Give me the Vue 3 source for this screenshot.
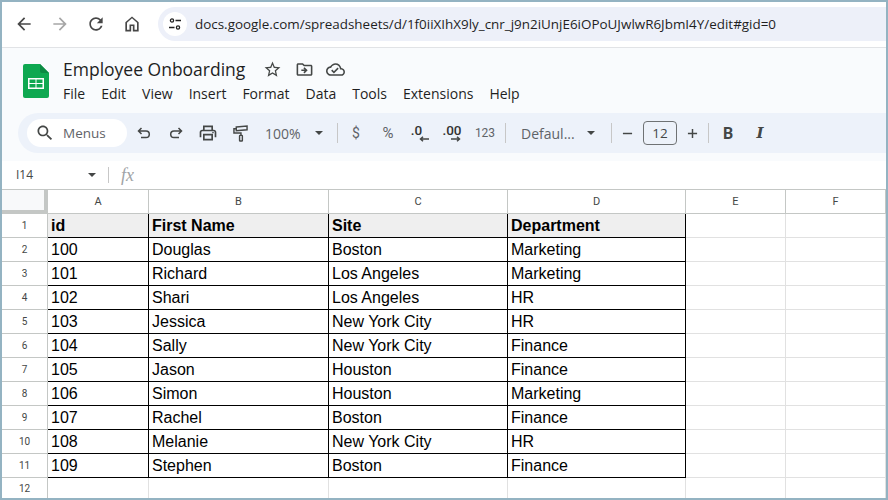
<script setup>
const menus = ['File', 'Edit', 'View', 'Insert', 'Format', 'Data', 'Tools', 'Extensions', 'Help'];

const columns = ['A', 'B', 'C', 'D', 'E', 'F'];

const header = ['id', 'First Name', 'Site', 'Department'];

const people = [
  ['100', 'Douglas', 'Boston', 'Marketing'],
  ['101', 'Richard', 'Los Angeles', 'Marketing'],
  ['102', 'Shari', 'Los Angeles', 'HR'],
  ['103', 'Jessica', 'New York City', 'HR'],
  ['104', 'Sally', 'New York City', 'Finance'],
  ['105', 'Jason', 'Houston', 'Finance'],
  ['106', 'Simon', 'Houston', 'Marketing'],
  ['107', 'Rachel', 'Boston', 'Finance'],
  ['108', 'Melanie', 'New York City', 'HR'],
  ['109', 'Stephen', 'Boston', 'Finance'],
];
</script>

<template>
  <div class="window">
    <!-- browser bar -->
    <div class="browser">
      <button class="nav nav-back">
        <svg viewBox="0 0 24 24" width="20" height="20"><path d="M20 11H7.83l5.59-5.59L12 4l-8 8 8 8 1.41-1.41L7.83 13H20v-2z" /></svg>
      </button>
      <button class="nav nav-off">
        <svg viewBox="0 0 24 24" width="20" height="20"><path d="M12 4l-1.41 1.41L16.17 11H4v2h12.17l-5.58 5.59L12 20l8-8z" /></svg>
      </button>
      <button class="nav">
        <svg viewBox="0 0 24 24" width="20" height="20"><path d="M17.65 6.35C16.2 4.9 14.21 4 12 4c-4.42 0-7.99 3.58-7.99 8s3.57 8 7.99 8c3.73 0 6.84-2.55 7.73-6h-2.08c-.82 2.33-3.04 4-5.65 4-3.31 0-6-2.69-6-6s2.69-6 6-6c1.66 0 3.14.69 4.22 1.78L13 11h7V4l-2.35 2.35z" /></svg>
      </button>
      <button class="nav">
        <svg viewBox="0 0 24 24" width="20" height="20"><path d="M12 5.2l6 5.3V19h-3v-6.500H9V19H6v-8.500l6-5.300M12 3L4 10v11h7v-6.500h2V21h7V10l-8-7z" /></svg>
      </button>
      <div class="address">
        <span class="tune">
          <svg viewBox="0 0 16 16" width="16" height="16" fill="none" stroke="#1f1f1f" stroke-width="1.3">
            <circle cx="5" cy="4.500" r="1.600" />
            <path d="M8.500 4.500h5.500M2 11.500h5.500" />
            <circle cx="11" cy="11.500" r="1.600" />
          </svg>
        </span>
        <span class="url">docs.google.com/spreadsheets/d/1f0iiXIhX9ly_cnr_j9n2iUnjE6iOPoUJwlwR6JbmI4Y/edit#gid=0</span>
      </div>
    </div>

    <!-- docs header -->
    <div class="docs">
      <div class="title-row">
        <svg class="logo" viewBox="0 0 26 34" width="26" height="34">
          <path d="M2 0h15l9 9v23a2 2 0 0 1-2 2H2a2 2 0 0 1-2-2V2a2 2 0 0 1 2-2z" fill="#0fa851" />
          <path d="M17 0l9 9h-7a2 2 0 0 1-2-2z" fill="#0c8a43" />
          <path d="M5 14h16v11H5z M6.500 15.500V19h6v-3.500z M13.500 15.500V19h6v-3.500z M6.500 20v3.500h6V20z M13.500 20v3.500h6V20z" fill="#fff" fill-rule="evenodd" />
        </svg>
        <div class="title-text">
          <div class="title-line">
            <span class="title">Employee Onboarding</span>
            <svg class="star" viewBox="0 0 24 24" width="19" height="19"><path d="M22 9.240l-7.190-.620L12 2 9.190 8.630 2 9.240l5.460 4.730L5.820 21 12 17.270 18.180 21l-1.630-7.030L22 9.240zM12 15.400l-3.760 2.270 1-4.280-3.320-2.880 4.380-.380L12 6.100l1.710 4.040 4.380.380-3.320 2.880 1 4.280L12 15.400z" /></svg>
            <svg class="move" viewBox="0 0 24 24" width="19" height="19"><path d="M20 6h-8l-2-2H4c-1.110 0-1.990.890-1.990 2L2 18c0 1.110.890 2 2 2h16c1.110 0 2-.890 2-2V8c0-1.110-.890-2-2-2zm0 12H4V6h5.170l2 2H20v10z" /><path d="M12.160 12H8v2h4.160l-1.590 1.590L11.990 17 16 13.010 11.990 9l-1.420 1.410z" /></svg>
            <svg class="cloud" viewBox="0 0 24 24" width="19" height="19"><path d="M19.350 10.040C18.670 6.590 15.640 4 12 4 9.110 4 6.600 5.640 5.350 8.040 2.340 8.360 0 10.910 0 14c0 3.310 2.690 6 6 6h13c2.760 0 5-2.240 5-5 0-2.640-2.050-4.780-4.650-4.960zM19 18H6c-2.210 0-4-1.790-4-4 0-2.050 1.530-3.760 3.560-3.970l1.070-.110.500-.950C8.080 7.140 9.940 6 12 6c2.620 0 4.880 1.860 5.390 4.430l.300 1.500 1.530.110c1.560.100 2.780 1.410 2.780 2.960 0 1.650-1.350 3-3 3zm-9-3.820l-2.090-2.090L6.500 13.500 10 17l6.010-6.010-1.410-1.410z" /></svg>
          </div>
          <div class="menus">
            <span v-for="m in menus" :key="m">{{ m }}</span>
          </div>
        </div>
      </div>

      <!-- toolbar -->
      <div class="toolbar">
        <div class="search">
          <svg viewBox="0 0 24 24" width="20" height="20"><path d="M15.500 14h-.790l-.280-.270C15.410 12.590 16 11.110 16 9.500 16 5.910 13.090 3 9.500 3S3 5.910 3 9.500 5.910 16 9.500 16c1.610 0 3.090-.590 4.230-1.570l.270.280v.790l5 4.990L20.490 19l-4.990-5zm-6 0C7.010 14 5 11.990 5 9.500S7.010 5 9.500 5 14 7.010 14 9.500 11.990 14 9.500 14z" /></svg>
          <span>Menus</span>
        </div>
        <span class="tb tb-first">
          <svg viewBox="0 0 16 16" width="16" height="16" fill="none" stroke="#444746" stroke-width="1.500"><path d="M5.500 3L2.500 6l3 3M2.500 6H10a3.300 3.300 0 0 1 0 6.600H5" /></svg>
        </span>
        <span class="tb">
          <svg viewBox="0 0 16 16" width="16" height="16" fill="none" stroke="#444746" stroke-width="1.500"><path d="M10.500 3l3 3-3 3M13.500 6H6a3.300 3.300 0 0 0 0 6.600h5" /></svg>
        </span>
        <span class="tb">
          <svg viewBox="0 0 24 24" width="20" height="20"><path d="M19 8h-1V3H6v5H5c-1.660 0-3 1.340-3 3v6h4v4h12v-4h4v-6c0-1.660-1.340-3-3-3zM8 5h8v3H8V5zm8 14H8v-4h8v4zm2-2v-4H6v4H4v-6c0-.550.450-1 1-1h14c.550 0 1 .450 1 1v6h-2z" /><circle cx="18" cy="11.500" r="1" /></svg>
        </span>
        <span class="tb">
          <svg viewBox="0 0 16 18" width="15" height="17" fill="none" stroke="#444746" stroke-width="1.500"><path d="M3.500 2l11.500-1v4L3.500 6z" /><path d="M3.500 4H1v4.500h7.500V11" /><rect x="7" y="11" width="3" height="6" rx=".6" /></svg>
        </span>
        <span class="zoom-val">100%</span>
        <span class="caret"></span>
        <span class="sep sep-a"></span>
        <span class="tb tb-dollar tb-text">$</span>
        <span class="tb tb-text tb-percent">%</span>
        <span class="tb tb-dec tb-dec-one">
          <b>.0</b>
          <svg viewBox="0 0 10 6" width="10" height="6" fill="none" stroke="#444746" stroke-width="1.500"><path d="M10 3H1.500M4 .7L1.500 3 4 5.300" /></svg>
        </span>
        <span class="tb tb-dec">
          <b>.00</b>
          <svg viewBox="0 0 10 6" width="10" height="6" fill="none" stroke="#444746" stroke-width="1.500"><path d="M0 3h8.500M6 .7L8.500 3 6 5.300" /></svg>
        </span>
        <span class="tb tb-text tb-123">123</span>
        <span class="sep sep-b"></span>
        <span class="font-name">Defaul...</span>
        <span class="caret caret-font"></span>
        <span class="sep sep-c"></span>
        <span class="tb tb-size">
          <svg viewBox="0 0 12 12" width="11" height="11"><path d="M1 5.200h10v1.600H1z" /></svg>
        </span>
        <span class="size-box">12</span>
        <span class="tb tb-size">
          <svg viewBox="0 0 12 12" width="11" height="11"><path d="M1 5.200h4.200V1h1.600v4.200H11v1.600H6.800V11H5.200V6.800H1z" /></svg>
        </span>
        <span class="sep"></span>
        <span class="tb tb-bold">B</span>
        <span class="tb tb-italic">I</span>
      </div>
    </div>

    <!-- formula bar -->
    <div class="formula">
      <span class="cell-name">I14</span>
      <span class="caret caret-name"></span>
      <span class="sep sep-f"></span>
      <span class="fx">fx</span>
    </div>

    <!-- grid -->
    <div class="sheet">
      <div class="corner"></div>
      <div v-for="c in columns" :key="c" class="col-head">{{ c }}</div>

      <div class="row-head">1</div>
      <div v-for="h in header" :key="h" class="cell cell-table cell-bold">{{ h }}</div>
      <div class="cell"></div>
      <div class="cell"></div>

      <template v-for="(p, r) in people" :key="p[0]">
        <div class="row-head">{{ r + 2 }}</div>
        <div v-for="(v, i) in p" :key="i" class="cell cell-table">{{ v }}</div>
        <div class="cell"></div>
        <div class="cell"></div>
      </template>

      <div class="row-head row-end">12</div>
      <div v-for="c in columns" :key="c" class="cell row-end"></div>
    </div>
  </div>
</template>

<style scoped>
.window {
  width: 888px;
  height: 500px;
  box-sizing: border-box;
  border: 2px solid #94b3c2;
  background: #fff;
  display: flex;
  flex-direction: column;
  overflow: hidden;
  font-family: "Roboto", "Liberation Sans", sans-serif;
}

.browser {
  height: 46px;
  flex: none;
  display: flex;
  align-items: flex-start;
  box-sizing: border-box;
  padding-left: 4px;
  border-bottom: 1px solid #e1e3e6;
  background: #fff;
}

.nav {
  width: 36px;
  height: 34px;
  margin-top: 5px;
  padding: 0;
  border: 0;
  background: none;
  display: flex;
  align-items: center;
  justify-content: center;
  fill: #474747;
}

.nav-off {
  fill: #a6a6a6;
}

.address {
  flex: 1;
  height: 34px;
  margin-left: 8px;
  margin-top: 5px;
  border-radius: 17px 0 0 17px;
  background: #edf0f9;
  display: flex;
  align-items: center;
  padding-left: 5px;
}

.tune {
  width: 24px;
  height: 24px;
  border-radius: 50%;
  background: #fff;
  display: flex;
  align-items: center;
  justify-content: center;
}

.url {
  margin-left: 8px;
  font-family: "Open Sans", sans-serif;
  font-size: 13.43px;
  color: #1f1f1f;
  white-space: nowrap;
}

.docs {
  height: 113px;
  flex: none;
  background: #f9fbfd;
  box-sizing: border-box;
}

.title-row {
  height: 65px;
  display: flex;
  padding-left: 21px;
}

.logo {
  margin-top: 16px;
}

.title-text {
  margin-left: 14px;
}

.title-line {
  display: flex;
  align-items: center;
  height: 24px;
  margin-top: 9px;
  fill: #444746;
}

.title {
  font-family: "Open Sans", sans-serif;
  font-size: 17.5px;
  color: #1f1f1f;
  white-space: nowrap;
  width: 181px;
}

.star {
  margin-left: 19px;
}

.move {
  margin-left: 13px;
}

.cloud {
  margin-left: 12px;
}

.menus {
  display: flex;
  margin-top: 2px;
  gap: 16px;
  font-family: "Open Sans", sans-serif;
  font-size: 14px;
  line-height: 22px;
  color: #1f1f1f;
}

.toolbar {
  height: 40px;
  margin-left: 16px;
  border-radius: 20px 0 0 20px;
  background: #edf2fa;
  display: flex;
  align-items: center;
  color: #444746;
  fill: #444746;
  padding-left: 9px;
}

.search {
  width: 100px;
  height: 28px;
  border-radius: 14px;
  background: #fff;
  display: flex;
  align-items: center;
  box-sizing: border-box;
  padding-left: 8px;
  flex: none;
}

.search span {
  margin-left: 8px;
  font-family: "Open Sans", sans-serif;
  font-size: 13.5px;
  color: #5f6368;
}

.tb {
  width: 32px;
  height: 28px;
  flex: none;
  display: flex;
  align-items: center;
  justify-content: center;
}

.tb-first {
  margin-left: 1px;
}

.tb-text {
  font-size: 14px;
  color: #5f6368;
}

.tb-dollar {
  margin-left: 2px;
}

.tb-percent {
  font-size: 15px;
}

.tb-123 {
  width: 34px;
  font-size: 12px;
}

.tb-dec {
  flex-direction: column;
  line-height: 11px;
  font-size: 13.5px;
}

.tb-dec b {
  font-weight: 500;
  color: #333;
}

.tb-dec-one b {
  margin-left: -7px;
}

.tb-dec svg {
  margin-left: 8px;
}

.zoom-val {
  width: 46px;
  padding-left: 9px;
  flex: none;
  font-family: "Open Sans", sans-serif;
  font-size: 14px;
  color: #5f6368;
}

.caret {
  width: 0;
  height: 0;
  flex: none;
  margin: 0 4px;
  border-left: 4px solid transparent;
  border-right: 4px solid transparent;
  border-top: 4px solid #444746;
}

.caret-font {
  margin: 0 4px 0 6px;
}

.sep {
  width: 1px;
  height: 20px;
  background: #c7c7c7;
  flex: none;
}

.sep-a {
  margin-left: 10px;
}

.sep-b {
  margin-left: 3px;
}

.sep-c {
  margin-left: 12px;
}

.font-name {
  width: 60px;
  margin-left: 15px;
  flex: none;
  font-family: "Open Sans", sans-serif;
  font-size: 14px;
  color: #5f6368;
  white-space: nowrap;
}

.tb-size {
  width: 31px;
}

.size-box {
  width: 34px;
  height: 24px;
  box-sizing: border-box;
  flex: none;
  border: 1px solid #6f7274;
  border-radius: 4px;
  display: flex;
  align-items: center;
  justify-content: center;
  font-family: "Open Sans", sans-serif;
  font-size: 13.5px;
  color: #444746;
}

.tb-bold {
  margin-left: 3px;
  font-family: "Roboto", sans-serif;
  font-weight: 700;
  font-size: 16px;
  color: #444746;
}

.tb-italic {
  font-family: "DejaVu Serif", serif;
  font-weight: 700;
  font-style: italic;
  font-size: 15px;
  color: #444746;
}

.formula {
  height: 28px;
  flex: none;
  display: flex;
  align-items: center;
  padding-left: 14px;
  background: #fff;
}

.cell-name {
  width: 72px;
  margin-bottom: 2px;
  font-family: "Open Sans", sans-serif;
  font-size: 12px;
  color: #444746;
}

.caret-name {
  margin: 0;
}

.sep-f {
  height: 16px;
  margin-left: 12px;
}

.fx {
  margin-left: 12px;
  font-family: "Liberation Serif", serif;
  font-style: italic;
  font-size: 18px;
  color: #a0a3a6;
}

.sheet {
  flex: 1;
  display: grid;
  grid-template-columns: 46px 101px 180px 179px 178px 100px 100px;
  grid-template-rows: repeat(12, 24px) 1fr;
  border-top: 1px solid #c4c7c5;
  box-sizing: border-box;
}

.corner {
  background: #f8f9fa;
  border-right: 4px solid #c4c7c5;
  border-bottom: 4px solid #c4c7c5;
  box-sizing: border-box;
}

.col-head {
  box-sizing: border-box;
  border-right: 1px solid #c4c7c5;
  border-bottom: 1px solid #c4c7c5;
  display: flex;
  align-items: center;
  justify-content: center;
  font-family: "Roboto", sans-serif;
  font-size: 11px;
  color: #444746;
}

.row-head {
  box-sizing: border-box;
  border-right: 1px solid #c4c7c5;
  border-bottom: 1px solid #c4c7c5;
  display: flex;
  align-items: center;
  justify-content: center;
  font-family: "Roboto", sans-serif;
  font-size: 10px;
  color: #444746;
}

.cell {
  box-sizing: border-box;
  border-right: 1px solid #e1e1e1;
  border-bottom: 1px solid #e1e1e1;
  font-family: "Liberation Sans", sans-serif;
  font-size: 16px;
  line-height: 23px;
  padding-left: 3px;
  color: #000;
  white-space: nowrap;
}

.cell-table {
  border-right-color: #000;
  border-bottom-color: #000;
}

.cell-bold {
  font-weight: 700;
  background: #efefef;
}

.row-end {
  border-bottom: 0;
}
</style>
